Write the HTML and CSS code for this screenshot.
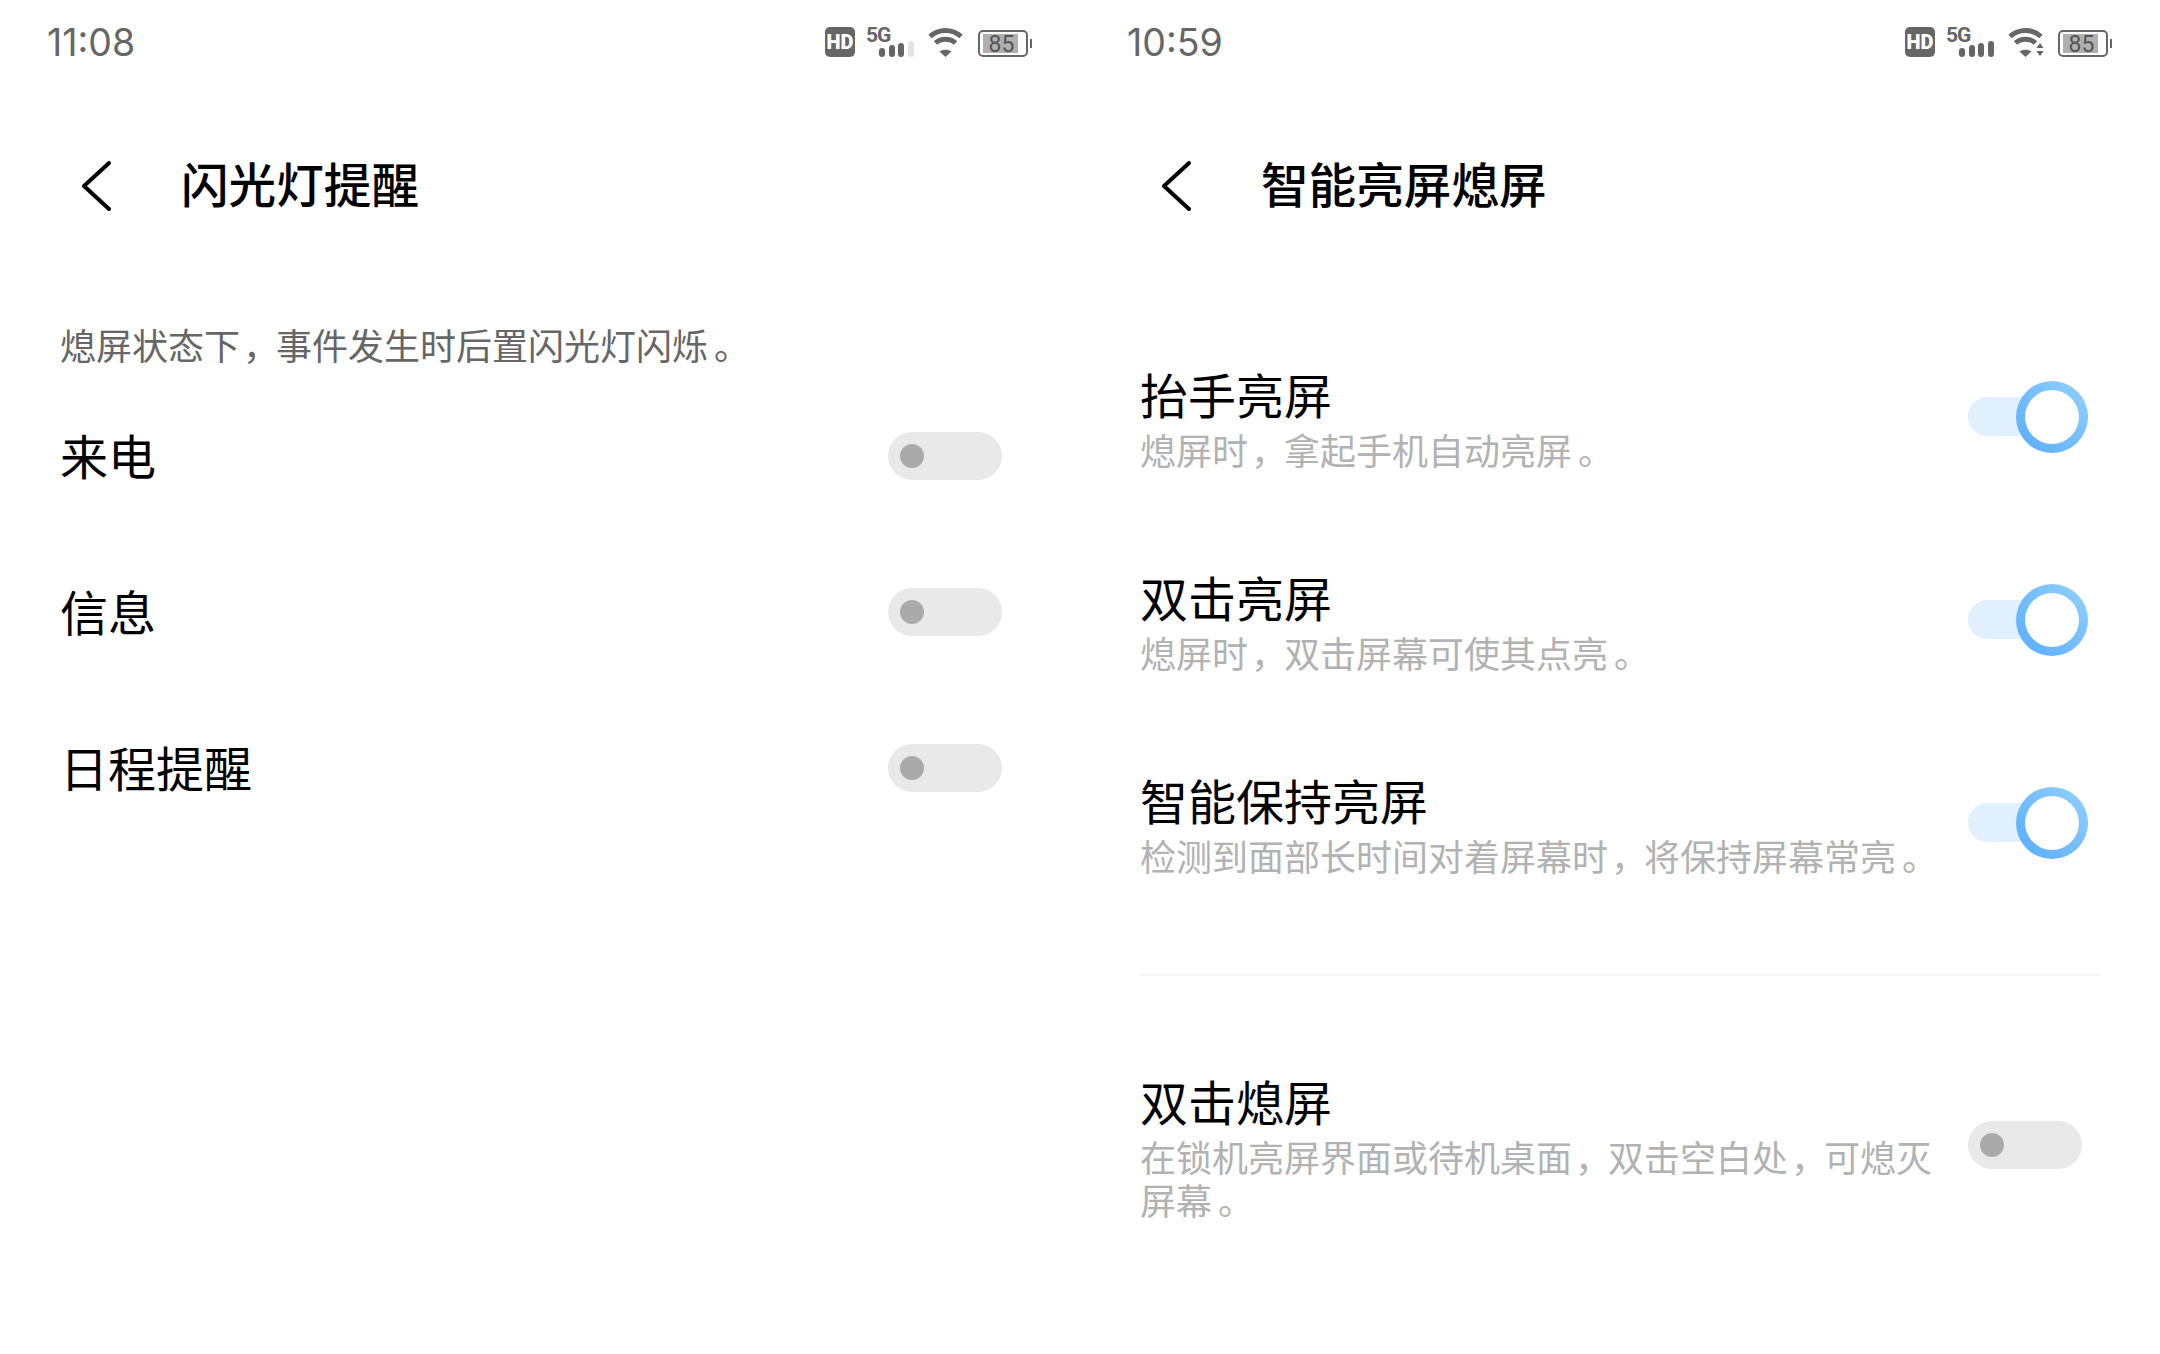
FILE: index.html
```html
<!DOCTYPE html>
<html lang="zh-CN">
<head>
<meta charset="utf-8">
<title>设置</title>
<link rel="stylesheet" href="styles.css">
</head>
<body>
<div class="screen">
  <section class="panel">
    <div class="status">
      <span class="time">11:08</span>
      <svg class="icons" viewBox="0 0 214 36" width="214" height="36">
        <rect x="5" y="3" width="30" height="30" rx="5" fill="#666"/>
        <text x="20" y="24.500" class="hd">HD</text>
        <text x="46" y="17.700" class="five">5G</text>
        <rect x="59" y="24" width="6" height="9" rx="3" fill="#666"/>
        <rect x="69" y="21" width="6" height="12" rx="3" fill="#666"/>
        <rect x="78" y="19" width="6" height="14" rx="3" fill="#666"/>
        <rect x="88" y="17" width="6" height="16" rx="3" fill="#e3e3e3"/>
        <path d="M110 12.500 C119 4.500 132 4.500 141 12.500" class="wifi"/>
        <path d="M115.500 19 C121 14 130 14 135.500 19" class="wifi"/>
        <path d="M125.500 33 L119.500 27.500 C123 25 128 25 131.500 27.500 Z" fill="#666"/>
        <rect x="159" y="7" width="48" height="25" rx="4" fill="none" stroke="#666" stroke-width="2"/>
        <rect x="163" y="10" width="35" height="19" fill="#b0b0b0"/>
        <rect x="210" y="15" width="2" height="9" fill="#666"/>
        <text x="181.500" y="27.700" class="batt">85</text>
      </svg>
    </div>
    <header class="head">
      <svg class="back" viewBox="0 0 30 50" width="30" height="50"><path d="M28 2 L3 25 L28 48"/></svg>
      <h1 class="title">闪光灯提醒</h1>
    </header>
    <p class="desc">熄屏状态下<span class="pn">，</span>事件发生时后置闪光灯闪烁<span class="pe">。</span></p>
    <div class="row-s"><span class="name">来电</span><span class="sw"><i class="dot"></i></span></div>
    <div class="row-s"><span class="name">信息</span><span class="sw"><i class="dot"></i></span></div>
    <div class="row-s"><span class="name">日程提醒</span><span class="sw"><i class="dot"></i></span></div>
  </section>

  <section class="panel">
    <div class="status">
      <span class="time">10:59</span>
      <svg class="icons" viewBox="0 0 214 36" width="214" height="36">
        <rect x="5" y="3" width="30" height="30" rx="5" fill="#666"/>
        <text x="20" y="24.500" class="hd">HD</text>
        <text x="46" y="17.700" class="five">5G</text>
        <rect x="59" y="24" width="6" height="9" rx="3" fill="#666"/>
        <rect x="69" y="21" width="6" height="12" rx="3" fill="#666"/>
        <rect x="78" y="19" width="6" height="14" rx="3" fill="#666"/>
        <rect x="88" y="17" width="6" height="16" rx="3" fill="#666"/>
        <path d="M110 12.500 C119 4.500 132 4.500 141 12.500" class="wifi"/>
        <path d="M115.500 19 C121 14 130 14 135.500 19" class="wifi"/>
        <path d="M125.500 33 L119.500 27.500 C123 25 128 25 131.500 27.500 Z" fill="#666"/>
        <path d="M140 19 L143.500 24 L136.500 24 Z M140 32 L143.500 27 L136.500 27 Z" fill="#666"/>
        <rect x="159" y="7" width="48" height="25" rx="4" fill="none" stroke="#666" stroke-width="2"/>
        <rect x="163" y="10" width="35" height="19" fill="#b0b0b0"/>
        <rect x="210" y="15" width="2" height="9" fill="#666"/>
        <text x="181.500" y="27.700" class="batt">85</text>
      </svg>
    </div>
    <header class="head">
      <svg class="back" viewBox="0 0 30 50" width="30" height="50"><path d="M28 2 L3 25 L28 48"/></svg>
      <h1 class="title">智能亮屏熄屏</h1>
    </header>
    <div class="group">
      <div class="row">
        <div class="text"><div class="name">抬手亮屏</div><div class="sub">熄屏时<span class="pn">，</span>拿起手机自动亮屏<span class="pe">。</span></div></div>
        <span class="on"><i class="ring"></i></span>
      </div>
      <div class="row">
        <div class="text"><div class="name">双击亮屏</div><div class="sub">熄屏时<span class="pn">，</span>双击屏幕可使其点亮<span class="pe">。</span></div></div>
        <span class="on"><i class="ring"></i></span>
      </div>
      <div class="row">
        <div class="text"><div class="name">智能保持亮屏</div><div class="sub">检测到面部长时间对着屏幕时<span class="pn">，</span>将保持屏幕常亮<span class="pe">。</span></div></div>
        <span class="on"><i class="ring"></i></span>
      </div>
    </div>
    <hr class="rule">
    <div class="row last">
      <div class="text"><div class="name">双击熄屏</div><div class="sub">在锁机亮屏界面或待机桌面<span class="pn">，</span>双击空白处<span class="pn">，</span><span>可熄灭</span><span>屏幕</span><span class="pe">。</span></div></div>
      <span class="sw"><i class="dot"></i></span>
    </div>
  </section>
</div>
</body>
</html>
```

FILE: styles.css
```css
* { box-sizing: border-box; }
html, body { margin: 0; padding: 0; background: #fff; }
body { font-family: "Noto Sans CJK SC", "Noto Sans", sans-serif; color: #000; }
.screen { display: grid; grid-template-columns: 1080px 1080px; width: 2160px; height: 1354px; overflow: hidden; }
.panel { display: flex; flex-direction: column; min-width: 0; }
.status { display: flex; align-items: center; justify-content: space-between; height: 84px; padding: 0 46px 0 47px; }
.time { margin-top: 2px; font-family: "Inter", sans-serif; font-size: 37.500px; line-height: 44px; color: #666; }
.icons { display: block; }
.hd { font: 900 20px "Roboto", sans-serif; fill: #fff; text-anchor: middle; }
.five { font: 700 21px "Roboto", sans-serif; letter-spacing: -1px; fill: #666; }
.batt { font: 400 23px "Roboto", sans-serif; fill: #555; text-anchor: middle; }
.wifi { fill: none; stroke: #666; stroke-width: 5; }
.head { display: flex; align-items: center; height: 204px; padding-left: 81px; }
.back { display: block; }
.back path { fill: none; stroke: #000; stroke-width: 4; stroke-linecap: round; stroke-linejoin: round; }
.title { margin: 0 0 6px 70px; font-size: 47.600px; font-weight: 500; line-height: 60px; color: #000; }
.desc { margin: 29px 0 7px; padding-left: 60px; font-size: 36px; line-height: 54px; color: #666; }
.row-s { display: flex; align-items: center; justify-content: space-between; height: 156px; padding: 0 78px 0 60px; }
.row-s .name { margin-bottom: 5px; }
.name { font-size: 48px; line-height: 70px; color: #000; }
.sw { position: relative; display: block; flex: none; width: 114px; height: 48px; border-radius: 24px; background: #e9e9e9; }
.dot { position: absolute; left: 12px; top: 12px; width: 24px; height: 24px; border-radius: 50%; background: #aaa; }
.group { margin-top: 27px; }
.row { display: flex; align-items: center; justify-content: space-between; height: 203px; padding: 0 72px 0 60px; }
.text { width: 806px; margin-bottom: 5px; }
.sub { font-size: 36px; line-height: 43px; color: #b2b2b2; }
.pn { padding-left: 3px; letter-spacing: -3px; }
.pe { padding-left: 6px; letter-spacing: -6px; }
.on { position: relative; display: block; flex: none; width: 120px; height: 39px; border-radius: 20px; background: #e0f0fe; }
.ring { position: absolute; right: 0; top: -16.500px; width: 72px; height: 72px; border-radius: 50%; border: 9px solid transparent; background: linear-gradient(#fff, #fff) padding-box, linear-gradient(45deg, #58acfb, #92d1ff) border-box; }
.rule { width: 960px; height: 2px; margin: 50px 0 0 60px; border: 0; background: #f5f5f5; }
.last { height: 250px; margin-top: 44px; padding-right: 78px; }
```
